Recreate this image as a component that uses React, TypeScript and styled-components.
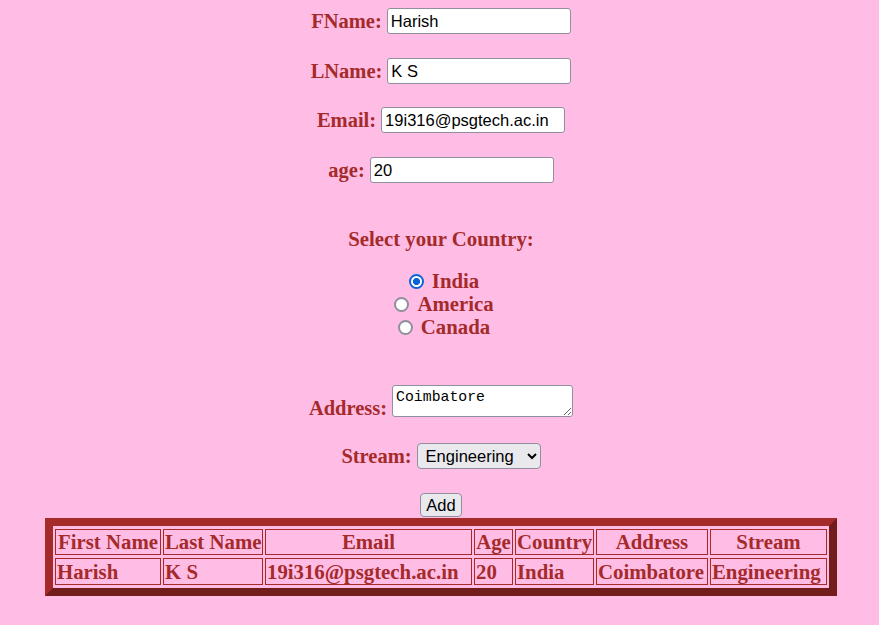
import React from "react";
import styled, { createGlobalStyle } from "styled-components";

const Global = createGlobalStyle`
  html, body { background: #ffbde6; }
  body { margin: 8px; font-family: "Liberation Serif", "Times New Roman", serif; color: #a52a2a; }
`;

const Page = styled.div`
  padding-left: 3px;
  display: flex;
  flex-direction: column;
  align-items: center;
`;

const FieldRow = styled.div<{ $top: number; $align?: string }>`
  display: flex;
  align-items: ${(p) => p.$align || "center"};
  justify-content: center;
  gap: 5px;
  margin-top: ${(p) => p.$top}px;
`;

const Label = styled.label<{ $shift?: number }>`
  font-weight: bold;
  font-size: 20.5px;
  line-height: 20px;
  margin-bottom: ${(p) => p.$shift || 0}px;
`;

const TextInput = styled.input`
  box-sizing: border-box;
  width: 184px;
  height: 26px;
  padding: 1px 3px;
  margin: 0;
  font-family: "Liberation Sans", Arial, sans-serif;
  font-size: 16.5px;
  color: #000;
  background: #fff;
  border: 1px solid #8f8f9d;
  border-radius: 3px;
`;

const Title = styled.div<{ $top: number }>`
  font-weight: bold;
  font-size: 20.8px;
  line-height: 24px;
  margin-top: ${(p) => p.$top}px;
`;

const RadioList = styled.div<{ $top: number }>`
  display: flex;
  flex-direction: column;
  align-items: center;
  margin-top: ${(p) => p.$top}px;
`;

const RadioRow = styled.label`
  display: flex;
  align-items: center;
  height: 23px;
  font-weight: bold;
  font-size: 20.8px;
`;

const Radio = styled.input`
  appearance: none;
  box-sizing: border-box;
  width: 15px;
  height: 15px;
  margin: 0 8px 0 6px;
  border: 2px solid #8f8f9d;
  border-radius: 50%;
  background: #fff;
  &:checked {
    border-color: #0b63d8;
    background: radial-gradient(circle, #0b63d8 0 3.2px, #fff 3.9px);
  }
`;

const Area = styled.textarea`
  box-sizing: border-box;
  width: 181px;
  height: 32px;
  margin: 0;
  padding: 3px 3px;
  font-family: "Liberation Mono", "Courier New", monospace;
  font-size: 14.8px;
  line-height: 16px;
  color: #000;
  background: #fff;
  border: 1px solid #8f8f9d;
  border-radius: 3px;
`;

const Select = styled.select`
  box-sizing: border-box;
  width: 124px;
  height: 26px;
  margin: 0;
  padding: 0 2px 0 4px;
  font-family: "Liberation Sans", Arial, sans-serif;
  font-size: 16.5px;
  color: #000;
  background: #e9e9ed;
  border: 1px solid #8f8f9d;
  border-radius: 4px;
`;

const Button = styled.button<{ $top: number }>`
  box-sizing: border-box;
  width: 42px;
  height: 24px;
  margin-top: ${(p) => p.$top}px;
  padding: 0;
  font-family: "Liberation Sans", Arial, sans-serif;
  font-size: 16.5px;
  color: #000;
  background: #e9e9ed;
  border: 1px solid #8f8f9d;
  border-radius: 4px;
`;

const Table = styled.table`
  margin-top: 1px;
  table-layout: fixed;
  width: 792px;
  box-sizing: border-box;
  border-collapse: separate;
  border-spacing: 2px 3px;
  border-style: solid;
  border-width: 8px;
  border-color: #a52a2a #721c1c #721c1c #a52a2a;
  font-weight: bold;
  font-size: 20.8px;
`;

const Th = styled.th<{ $w: number }>`
  width: ${(p) => p.$w}px;
  box-sizing: border-box;
  height: 25px;
  padding: 0 1px;
  border: 1px solid #a52a2a;
  text-align: center;
  white-space: nowrap;
  overflow: hidden;
  line-height: 24px;
`;

const Td = styled.td`
  height: 25px;
  padding: 0 1px;
  border: 1px solid #a52a2a;
  text-align: left;
  white-space: nowrap;
  overflow: hidden;
  line-height: 24px;
`;

const cols = [
  { h: "First Name", w: 106, v: "Harish" },
  { h: "Last Name", w: 100, v: "K S" },
  { h: "Email", w: 207, v: "19i316@psgtech.ac.in" },
  { h: "Age", w: 39, v: "20" },
  { h: "Country", w: 79, v: "India" },
  { h: "Address", w: 112, v: "Coimbatore" },
  { h: "Stream", w: 117, v: "Engineering" },
];

export default function App() {
  return (
    <>
      <Global />
      <Page>
        <FieldRow $top={0}>
          <Label>FName:</Label>
          <TextInput defaultValue="Harish" />
        </FieldRow>
        <FieldRow $top={24}>
          <Label>LName:</Label>
          <TextInput defaultValue="K S" />
        </FieldRow>
        <FieldRow $top={23}>
          <Label>Email:</Label>
          <TextInput defaultValue="19i316@psgtech.ac.in" />
        </FieldRow>
        <FieldRow $top={24}>
          <Label>age:</Label>
          <TextInput defaultValue="20" />
        </FieldRow>
        <Title $top={44}>Select your Country:</Title>
        <RadioList $top={18.5}>
          <RadioRow>
            <Radio type="radio" name="country" defaultChecked />
            India
          </RadioRow>
          <RadioRow>
            <Radio type="radio" name="country" />
            America
          </RadioRow>
          <RadioRow>
            <Radio type="radio" name="country" />
            Canada
          </RadioRow>
        </RadioList>
        <FieldRow $top={46.5} $align="flex-end">
          <Label $shift={-1}>Address:</Label>
          <Area defaultValue="Coimbatore" />
        </FieldRow>
        <FieldRow $top={26}>
          <Label>Stream:</Label>
          <Select defaultValue="Engineering">
            <option>Engineering</option>
            <option>Arts</option>
            <option>Science</option>
          </Select>
        </FieldRow>
        <Button $top={24}>Add</Button>
        <Table>
          <thead>
            <tr>
              {cols.map((c) => (
                <Th key={c.h} $w={c.w}>
                  {c.h}
                </Th>
              ))}
            </tr>
          </thead>
          <tbody>
            <tr>
              {cols.map((c) => (
                <Td key={c.h}>{c.v}</Td>
              ))}
            </tr>
          </tbody>
        </Table>
      </Page>
    </>
  );
}
